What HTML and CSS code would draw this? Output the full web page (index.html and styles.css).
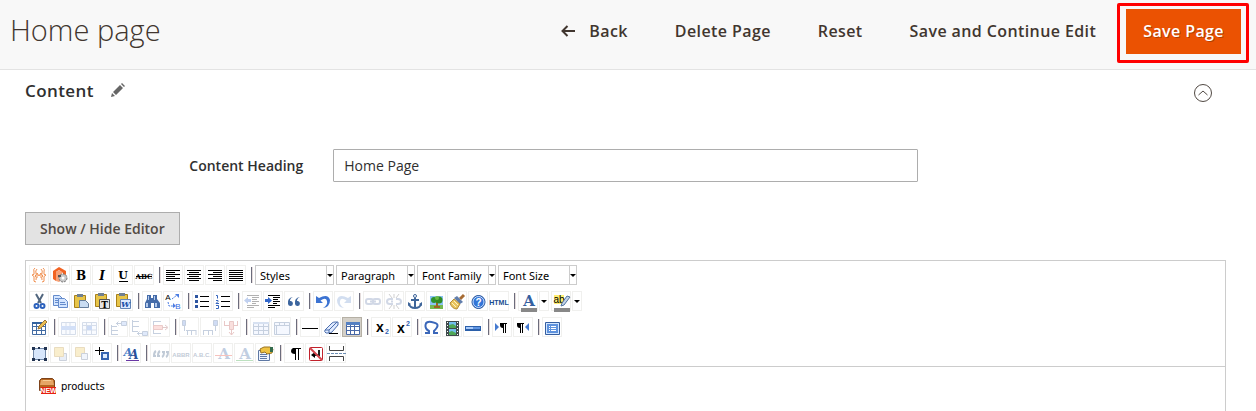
FILE: index.html
```html
<!DOCTYPE html>
<html lang="en">
<head>
    <meta charset="UTF-8">
    <meta name="viewport" content="width=device-width, initial-scale=1.0">
    <title>Home page</title>
    <link rel="stylesheet" href="styles.css">
</head>
<body>
    <header class="page-header">
        <h1>Home page</h1>
        <div class="page-actions">
            <button type="button" class="action"><svg class="back-icon" width="14" height="12" viewBox="0 0 14 12"><path d="M6.500 1L1.500 6l5 5M1.500 6H14"/></svg>Back</button>
            <button type="button" class="action">Delete Page</button>
            <button type="button" class="action">Reset</button>
            <button type="button" class="action">Save and Continue Edit</button>
            <div class="highlight"><button type="button" class="primary">Save Page</button></div>
        </div>
    </header>

    <main class="content">
        <div class="section-title">
            <h2>Content</h2>
            <svg class="pencil" width="14" height="14" viewBox="0 0 14 14"><path d="M0 14l1-4 3 3zM2 9l7-7 3 3-7 7zM10 1l1-1 3 3-1 1z"/></svg>
            <button type="button" class="collapse" aria-label="Collapse"><svg width="20" height="20" viewBox="0 0 20 20"><circle cx="10" cy="10" r="8.500"/><path d="M5.500 12L10 8l4.500 4"/></svg></button>
        </div>

        <div class="field">
            <label for="heading">Content Heading</label>
            <input type="text" id="heading" value="Home Page">
        </div>

        <button type="button" class="toggle-editor">Show / Hide Editor</button>

        <div class="editor">
            <div class="toolbar">
                <!-- Row 1: text style and format lists -->
                <div class="row">
                    <button type="button" class="tool" title="Insert Variable"><svg viewBox="0 0 20 20"><g fill="none" stroke="#f09050"><path d="M6 3Q4 4 5 7T3 10q3 1 2 4t2 3M14 3q2 1 1 4t2 3q-3 1-2 4t-2 3"/><path d="M8 4Q6 6 7 8T6 11q2 1 1 4M12 4q2 2 1 4t1 3q-2 1-1 4"/><path d="M8 13V8l2 3 2-3v5"/></g></svg></button>
                    <button type="button" class="tool" title="Insert Widget"><svg viewBox="0 0 20 20"><path fill="#f26322" d="M9 2l7 4v8l-3 2V8L9 5 6 7v9l-3-2V6z"/><path fill="#f7a278" d="M6 7l3-2 3 2v8l-3 2-3-1z"/><circle cx="13" cy="13" r="4" fill="#c8c8c8" stroke="#777" stroke-dasharray="2 1"/><circle cx="13" cy="13" r="1.500" fill="#fff"/><path fill="#555" d="M8 10h3v2H8z"/></svg></button>
                    <button type="button" class="tool" title="Bold"><svg viewBox="0 0 20 20"><text class="serif" x="10" y="15" font-size="12">B</text></svg></button>
                    <button type="button" class="tool" title="Italic"><svg viewBox="0 0 20 20"><text class="serif" x="10" y="15" font-size="12" font-style="italic">I</text></svg></button>
                    <button type="button" class="tool" title="Underline"><svg viewBox="0 0 20 20"><text class="serif" x="10" y="14" font-size="11">U</text><path fill="#000" d="M6 16h9v1H6z"/></svg></button>
                    <button type="button" class="tool" title="Strikethrough"><svg viewBox="0 0 20 20"><text class="serif" x="10" y="14" font-size="7">ABC</text><path fill="#000" d="M2 11h16v1H2z"/></svg></button>
                    <span class="sep"></span>
                    <button type="button" class="tool" title="Align Left"><svg viewBox="0 0 20 20"><path class="ink" d="M3 5.500h14M3 7.500h9M3 9.500h14M3 11.500h9M3 13.500h14M3 15.500h9"/></svg></button>
                    <button type="button" class="tool" title="Align Center"><svg viewBox="0 0 20 20"><path class="ink" d="M3 5.500h14M5 7.500h10M3 9.500h14M5 11.500h10M3 13.500h14M5 15.500h10"/></svg></button>
                    <button type="button" class="tool" title="Align Right"><svg viewBox="0 0 20 20"><path class="ink" d="M3 5.500h14M8 7.500h9M3 9.500h14M8 11.500h9M3 13.500h14M8 15.500h9"/></svg></button>
                    <button type="button" class="tool" title="Align Full"><svg viewBox="0 0 20 20"><path class="ink" d="M3 5.500h14M3 7.500h14M3 9.500h14M3 11.500h14M3 13.500h14M3 15.500h14"/></svg></button>
                    <span class="sep"></span>
                    <div class="list"><select aria-label="Styles"><option>Styles</option></select></div>
                    <div class="list"><select aria-label="Format"><option>Paragraph</option></select></div>
                    <div class="list"><select aria-label="Font Family"><option>Font Family</option></select></div>
                    <div class="list"><select aria-label="Font Size"><option>Font Size</option></select></div>
                </div>

                <!-- Row 2: clipboard, lists, links and colors -->
                <div class="row">
                    <button type="button" class="tool" title="Cut"><svg viewBox="0 0 20 20"><path fill="none" stroke="#52677f" stroke-width="2" d="M7 3l5 9M14 3l-5 9"/><g fill="none" stroke="#2d62bd" stroke-width="2"><circle cx="7.500" cy="15" r="2"/><circle cx="13.500" cy="15" r="2"/></g></svg></button>
                    <button type="button" class="tool" title="Copy"><svg viewBox="0 0 20 20"><g fill="#d3e5ff" stroke="#648bcb"><path d="M3.500 4.500h6l3 3v7h-9z"/><path d="M8.500 7.500h6l3 3v6h-9z"/><path d="M5 7.500h3M5 9.500h3M5 11.500h3M10 11.500h5M10 13.500h6"/></g></svg></button>
                    <button type="button" class="tool" title="Paste"><svg viewBox="0 0 20 20"><path fill="#e8c549" stroke="#a88018" d="M3.500 4.500h11v12h-11z"/><path fill="#708090" d="M6 3h6v3H6z"/><path fill="#c9dcf2" stroke="#657e9d" d="M8.500 9.500h6l3 3v4h-9z"/></svg></button>
                    <button type="button" class="tool" title="Paste as Plain Text"><svg viewBox="0 0 20 20"><path fill="#e8c549" stroke="#a88018" d="M3.500 3.500h11v12h-11z"/><path fill="#708090" d="M6 2h6v3H6z"/><path fill="#e4e4e4" stroke="#555" d="M7.500 8.500h10v9h-10z"/><text class="serif" x="12.500" y="16.500" font-size="9">T</text></svg></button>
                    <button type="button" class="tool" title="Paste from Word"><svg viewBox="0 0 20 20"><path fill="#e8c549" stroke="#a88018" d="M3.500 3.500h11v12h-11z"/><path fill="#708090" d="M6 2h6v3H6z"/><path fill="#dce9ff" stroke="#6384b5" d="M7.500 8.500h10v9h-10z"/><text class="serif" x="12.500" y="16" font-size="8" font-style="italic" fill="#1d4fa8">W</text></svg></button>
                    <span class="sep"></span>
                    <button type="button" class="tool" title="Find"><svg viewBox="0 0 20 20"><path fill="#446ba8" d="M5 4h4v3h2V4h4v4l3 4v5h-6v-5H9v5H3v-5l2-4z"/><path fill="#b5cbed" d="M6 5h1v4H6zM12 5h1v4h-1zM4 12h2v4H4zM13 12h2v4h-2z"/></svg></button>
                    <button type="button" class="tool" title="Find/Replace"><svg viewBox="0 0 20 20"><text class="sans plain" x="5" y="9" font-size="8">A</text><text class="sans plain" x="15" y="18" font-size="8" fill="#326be0">B</text><path fill="none" stroke="#4b7de2" stroke-dasharray="2 1" d="M9 8l5-4M5 11l1 4h5"/><path fill="#4b7de2" d="M12 3h4v4zM10 12l3 3-3 2z"/></svg></button>
                    <span class="sep"></span>
                    <button type="button" class="tool" title="Unordered List"><svg viewBox="0 0 20 20"><path fill="#2d55a0" d="M3 4h3v3H3zM3 9h3v3H3zM3 14h3v3H3z"/><path class="ink" d="M8 5.500h9M8 10.500h9M8 15.500h9"/></svg></button>
                    <button type="button" class="tool" title="Ordered List"><svg viewBox="0 0 20 20"><path fill="none" stroke="#3565bd" d="M3 4.500h1.500v3M3 9.500h2v1L3 12.500h3M3 14.500h2.500v3H3"/><path class="ink" d="M8 5.500h9M8 10.500h9M8 15.500h9"/></svg></button>
                    <span class="sep"></span>
                    <button type="button" class="tool" title="Outdent" disabled><svg viewBox="0 0 20 20"><path class="ink" d="M5 4.500h12M10 6.500h7M10 8.500h5M10 10.500h7M10 12.500h4M5 14.500h12M5 16.500h7"/><path fill="#3267cb" d="M2 9.500L6 6v2h3v3H6v2z"/></svg></button>
                    <button type="button" class="tool" title="Indent"><svg viewBox="0 0 20 20"><path class="ink" d="M5 4.500h12M10 6.500h7M10 8.500h5M10 10.500h7M10 12.500h4M5 14.500h12M5 16.500h7"/><path fill="#3267cb" d="M9 9.500L5 6v2H2v3h3v2z"/></svg></button>
                    <button type="button" class="tool" title="Blockquote"><svg viewBox="0 0 20 20"><path fill="#3c659e" d="M9 6Q6 7 6 10h1a2.500 2.500 0 1 1-3 3q-1-6 5-7zM16 6q-3 1-3 4h1a2.500 2.500 0 1 1-3 3q-1-6 5-7z"/></svg></button>
                    <span class="sep"></span>
                    <button type="button" class="tool" title="Undo"><svg viewBox="0 0 20 20"><path fill="#3c73d2" d="M3 5v7h7L7.500 9.500Q13 6 14 10t-4 7q7-1 7-8-2-7-11-2z"/></svg></button>
                    <button type="button" class="tool" title="Redo" disabled><svg viewBox="0 0 20 20"><path fill="#6993cc" d="M17 5v7h-7l2.500-2.500Q7 6 6 10t4 7Q3 16 3 9q2-7 11-2z"/></svg></button>
                    <span class="sep"></span>
                    <button type="button" class="tool" title="Insert Link" disabled><svg viewBox="0 0 20 20"><g fill="none" stroke="#6b80ad" stroke-width="2"><rect x="3" y="8" width="7" height="5" rx="2"/><rect x="10" y="8" width="7" height="5" rx="2"/><path d="M7 10.500h6"/></g></svg></button>
                    <button type="button" class="tool" title="Unlink" disabled><svg viewBox="0 0 20 20"><g fill="none" stroke="#6b80ad" stroke-width="2"><path d="M9 8H6Q3 8 3 10.500T6 13h3M12 8h2q3 0 3 2.500T14 13h-2M7 10.500h2"/></g><path stroke="#666" d="M10 3v4M10 14v4M5 3l3 4M15 3l-3 4M5 18l3-4M15 18l-3-4"/></svg></button>
                    <button type="button" class="tool" title="Anchor"><svg viewBox="0 0 20 20"><path fill="none" stroke="#3e6599" stroke-width="2" d="M10 7v10M6 9h8M4 13q1 4 6 4t6-4"/><circle cx="10" cy="5" r="1.500" fill="#fff" stroke="#3e6599"/><path fill="#3e6599" d="M3 15v-4l3 2zM17 15v-4l-3 2z"/></svg></button>
                    <button type="button" class="tool" title="Insert Image"><svg viewBox="0 0 20 20"><path fill="#8bc3f5" d="M4 5h13v12H4z"/><path fill="#75b850" d="M4 14h13v4H4z"/><path fill="#9e6224" d="M10 9h2v6h2v2H8v-2h2z"/><circle cx="8" cy="9" r="3" fill="#2d922b"/><circle cx="13" cy="9" r="3.500" fill="#2f8b23"/><circle cx="11" cy="7" r="2" fill="#6abb43"/></svg></button>
                    <button type="button" class="tool" title="Cleanup"><svg viewBox="0 0 20 20"><path stroke="#a66b32" stroke-width="3" d="M17 4l-4 4"/><path fill="#617eac" d="M10 5l6 6-3 2-6-6z"/><path fill="#e9c45e" stroke="#b38c39" d="M7 8l6 5-3 5q-5 0-7-6z"/><path stroke="#fff3bf" d="M5 12l4 4M7 10l4 4"/></svg></button>
                    <button type="button" class="tool" title="Help"><svg viewBox="0 0 20 20"><circle cx="10.500" cy="11" r="6.500" fill="#3275d8" stroke="#234f96"/><circle cx="10.500" cy="11" r="5.500" fill="none" stroke="#c8dfff"/><text class="sans" x="10.500" y="15" font-size="10" fill="#fff">?</text></svg></button>
                    <button type="button" class="tool" title="Edit HTML"><svg viewBox="0 0 20 20"><text class="sans" x="10" y="14" font-size="7" fill="#164b90">HTML</text></svg></button>
                    <span class="sep"></span>
                    <button type="button" class="tool" title="Text Color"><svg viewBox="0 0 20 20"><text class="serif" x="11" y="15" font-size="15" fill="#34609f">A</text><path fill="#888" d="M3 17h16v4H3z"/></svg></button>
                    <button type="button" class="tool open" title="Choose Text Color"></button>
                    <button type="button" class="tool" title="Background Color"><svg viewBox="0 0 20 20"><path fill="#ffef70" d="M3 4h10v9H3z"/><text class="sans plain" x="8" y="12" font-size="10">ab</text><path fill="#c1d2e8" stroke="#53759e" d="M16 5l3 1-6 8-3 1 1-3z"/><path fill="#888" d="M3 17h16v4H3z"/></svg></button>
                    <button type="button" class="tool open" title="Choose Background Color"></button>
                </div>

                <!-- Row 3: tables and symbols -->
                <div class="row">
                    <button type="button" class="tool" title="Insert Table"><svg viewBox="0 0 20 20"><path fill="#fff" stroke="#426ba2" d="M3.500 5.500h13v12h-13zM3.500 9.500h13M3.500 13.500h13M7.500 7v10M12.500 7v10"/><path fill="#33639f" d="M3 5h14v2H3z"/><path fill="#eabe53" stroke="#9d7535" d="M9 12l1-3 6-6 2 2-6 6z"/></svg></button>
                    <span class="sep"></span>
                    <button type="button" class="tool" title="Row Properties" disabled><svg viewBox="0 0 20 20"><path fill="#edf3ff" stroke="#7890bb" d="M3.500 5.500h14v12h-14zM8 5v12M12 5v12"/><path fill="#709ce5" d="M3 9h15v4H3z"/></svg></button>
                    <button type="button" class="tool" title="Cell Properties" disabled><svg viewBox="0 0 20 20"><path fill="#edf3ff" stroke="#7890bb" d="M3.500 5.500h14v12h-14zM3 8.500h14M3 13h14M7.500 5v12M12.500 5v12"/><path fill="#5384dc" d="M8 9h5v4H8z"/></svg></button>
                    <span class="sep"></span>
                    <button type="button" class="tool" title="Insert Row Before" disabled><svg viewBox="0 0 20 20"><path fill="none" stroke="#456798" d="M3.500 8v10M3 9.500h6M3 13.500h7M3 17.500h7M8 6.500h5M10.500 4.500l-2 2 2 2"/><path fill="#97b9f5" stroke="#456798" d="M13.500 4.500h5v4h-5z"/></svg></button>
                    <button type="button" class="tool" title="Insert Row After" disabled><svg viewBox="0 0 20 20"><path fill="none" stroke="#456798" d="M3.500 3v12M3 4.500h7M3 9.500h7M3 14.500h6M8 16.500h5M10.500 14.500l-2 2 2 2"/><path fill="#97b9f5" stroke="#456798" d="M13.500 14.500h5v4h-5z"/></svg></button>
                    <button type="button" class="tool" title="Delete Row" disabled><svg viewBox="0 0 20 20"><path fill="none" stroke="#456798" d="M3.500 4v13M3 4.500h8M3 16.500h8"/><path fill="#f69c93" stroke="#be5450" d="M3.500 8.500h9v4h-9z"/><path fill="none" stroke="#9e5454" d="M12 10.500h5M15 8l3 2.500-3 2.500"/></svg></button>
                    <span class="sep"></span>
                    <button type="button" class="tool" title="Insert Column Before" disabled><svg viewBox="0 0 20 20"><path fill="#638ade" stroke="#456798" d="M3.500 3.500h3v5h-3z"/><path fill="none" stroke="#456798" d="M5.500 9v5M7 13.500h10M8.500 13v5M12.500 13v5M17 13v5"/></svg></button>
                    <button type="button" class="tool" title="Insert Column After" disabled><svg viewBox="0 0 20 20"><path fill="#638ade" stroke="#456798" d="M13.500 3.500h4v5h-4z"/><path fill="none" stroke="#456798" d="M15.500 9v5M3 13.500h10M3.500 13v5M8.500 13v5M12.500 13v5"/></svg></button>
                    <button type="button" class="tool" title="Remove Column" disabled><svg viewBox="0 0 20 20"><path fill="none" stroke="#b74b48" d="M3.500 4v5M3 8.500h5M16.500 4v5M16 8.500h-4M10.500 12v6M8 15l2.500 3 2.500-3"/><path fill="#ee9890" stroke="#b74b48" d="M8.500 4.500h4v8h-4z"/></svg></button>
                    <span class="sep"></span>
                    <button type="button" class="tool" title="Split Cells" disabled><svg viewBox="0 0 20 20"><path fill="#e1eaff" stroke="#456798" d="M3.500 5.500h15v12h-15zM3 9.500h15M3 13.500h15M8.500 7v10M13.500 7v10"/><path fill="#7d9dd4" d="M3 5h16v2H3z"/></svg></button>
                    <button type="button" class="tool" title="Merge Cells" disabled><svg viewBox="0 0 20 20"><path fill="#e1eaff" stroke="#456798" d="M3.500 5.500h15v12h-15zM3 8.500h15M8.500 5v3M13.500 5v3M5.500 9v8"/></svg></button>
                    <span class="sep"></span>
                    <button type="button" class="tool" title="Horizontal Line"><svg viewBox="0 0 20 20"><path class="ink" d="M2 11.500h16"/></svg></button>
                    <button type="button" class="tool" title="Remove Formatting"><svg viewBox="0 0 20 20"><path fill="#dfeaff" stroke="#4b6ead" d="M4 13l7-7q1-1 3-1h3v3l-6 7q-1 1-3 1H5q-2-1-1-3z"/><path fill="none" stroke="#4b6ead" d="M4 13h4l8-8M8 13v3"/><path class="ink" d="M8 16.500h9"/></svg></button>
                    <button type="button" class="tool active" title="Toggle Guidelines"><svg viewBox="0 0 20 20"><path fill="#fff" stroke="#4868a6" d="M4.500 5.500h13v12h-13zM4 9.500h13M4 13.500h13M8.500 6v11M12.500 6v11"/><path fill="#5580c2" d="M4 5h14v3H4z"/></svg></button>
                    <span class="sep"></span>
                    <button type="button" class="tool" title="Subscript"><svg viewBox="0 0 20 20"><text class="sans" x="9" y="15" font-size="14">x</text><text class="sans" x="16" y="17" font-size="7" fill="#315fb1">2</text></svg></button>
                    <button type="button" class="tool" title="Superscript"><svg viewBox="0 0 20 20"><text class="sans" x="9" y="16" font-size="14">x</text><text class="sans" x="16" y="9" font-size="7" fill="#315fb1">2</text></svg></button>
                    <span class="sep"></span>
                    <button type="button" class="tool" title="Insert Special Character"><svg viewBox="0 0 20 20"><path fill="none" stroke="#3b67b9" stroke-width="2" d="M4 16h4v-2Q4 12 4.500 8T10.500 5 16.500 8 13 14v2h4"/></svg></button>
                    <button type="button" class="tool" title="Insert Media"><svg viewBox="0 0 20 20"><path fill="#404a4c" d="M4 4h13v15H4z"/><path fill="#72bdec" d="M7 5h7v6H7zM7 12h7v6H7z"/><path fill="#4ea655" d="M7 8l4-1 3 2v2H7zM7 15l3-1 4 2v2H7z"/><path stroke="#fff" stroke-dasharray="1 2" d="M5.500 5v13M15.500 5v13"/></svg></button>
                    <button type="button" class="tool" title="Advanced Rule"><svg viewBox="0 0 20 20"><path fill="#2b5fa9" d="M2 9h16v5H2z"/><path fill="#a9cbfa" d="M3 10h7v2H3z"/><path fill="#5f95e3" d="M10 10h7v2h-7z"/></svg></button>
                    <span class="sep"></span>
                    <button type="button" class="tool" title="Left to Right"><svg viewBox="0 0 20 20"><path fill="#457ad0" d="M3 6l4 4-4 4z"/><path d="M8 6h7v1h-1v9h-1V7h-1v9h-1v-5Q8 11 8 8z"/></svg></button>
                    <button type="button" class="tool" title="Right to Left"><svg viewBox="0 0 20 20"><path fill="#457ad0" d="M16 6l-4 4 4 4z"/><path d="M4 6h7v1h-1v9H9V7H8v9H7v-5Q4 11 4 8z"/></svg></button>
                    <span class="sep"></span>
                    <button type="button" class="tool" title="Toggle Fullscreen"><svg viewBox="0 0 20 20"><path fill="#d2e6ff" stroke="#355ea0" d="M3.500 5.500h14v12h-14z"/><path fill="#5e92dd" d="M5 7h11v9H5z"/><path stroke="#fff" d="M7 9.500h1M9 9.500h5M7 11.500h1M9 11.500h5M7 13.500h1M9 13.500h5"/></svg></button>
                </div>

                <!-- Row 4: layers, styles and visual aids -->
                <div class="row">
                    <button type="button" class="tool" title="Insert Layer"><svg viewBox="0 0 20 20"><path fill="#d7e6fb" stroke="#738aa9" d="M4.500 5.500h12v11h-12z"/><path fill="#213351" d="M3 4h3v3H3zM9 4h2v2H9zM15 4h3v3h-3zM3 15h3v3H3zM9 16h2v2H9zM15 15h3v3h-3z"/></svg></button>
                    <button type="button" class="tool" title="Move Forward" disabled><svg viewBox="0 0 20 20"><path fill="#b8c8e8" stroke="#57698b" d="M9.500 10.500h7v7h-7z"/><path fill="#edc85e" stroke="#b78d30" d="M4.500 4.500h9v9h-9z"/></svg></button>
                    <button type="button" class="tool" title="Move Backward" disabled><svg viewBox="0 0 20 20"><path fill="#edc85e" stroke="#b78d30" d="M4.500 4.500h9v9h-9z"/><path fill="#d4e1f7" stroke="#57698b" d="M10.500 10.500h6v6h-6z"/></svg></button>
                    <button type="button" class="tool" title="Absolute Positioning"><svg viewBox="0 0 20 20"><path class="ink" d="M3 7.500h9M7.500 4v8"/><path fill="#dcebff" stroke="#3564b2" stroke-width="2" d="M10 10h6v6h-6z"/></svg></button>
                    <span class="sep"></span>
                    <button type="button" class="tool" title="Edit CSS Style"><svg viewBox="0 0 20 20"><text class="serif" x="7" y="13" font-size="11" font-style="italic" fill="#4478c3">A</text><text class="serif" x="13" y="16" font-size="12" font-style="italic" fill="#294f99">A</text><path stroke="#6a38a4" d="M5 17.500h13"/></svg></button>
                    <span class="sep"></span>
                    <button type="button" class="tool" title="Citation" disabled><svg viewBox="0 0 20 20"><path fill="none" stroke="#304e78" stroke-width="2" d="M6 8q-2 1-2 5h2M10 8q-2 1-2 5h2M12 9h2q0 4-2 5M16 9h2q0 4-2 5"/></svg></button>
                    <button type="button" class="tool" title="Abbreviation" disabled><svg viewBox="0 0 20 20"><text class="sans" x="10" y="14" font-size="6" fill="#304e78">ABBR</text></svg></button>
                    <button type="button" class="tool" title="Acronym" disabled><svg viewBox="0 0 20 20"><text class="sans" x="10" y="14" font-size="6" fill="#304e78">A.B.C.</text></svg></button>
                    <button type="button" class="tool" title="Deletion" disabled><svg viewBox="0 0 20 20"><text class="serif" x="11" y="16" font-size="15" fill="#34609f">A</text><path stroke="#e53828" d="M2 12.500h17"/></svg></button>
                    <button type="button" class="tool" title="Insertion" disabled><svg viewBox="0 0 20 20"><text class="serif" x="11" y="16" font-size="15" fill="#34609f">A</text><path stroke="#249c30" d="M2 17.500h17"/></svg></button>
                    <button type="button" class="tool" title="Attributes"><svg viewBox="0 0 20 20"><path fill="#edf3ff" stroke="#5e78a4" d="M3.500 7.500h11v10h-11z"/><path stroke="#5e78a4" d="M5 11.500h7M5 13.500h7M5 15.500h7"/><path fill="#efc342" stroke="#997320" d="M5 6l4-2h6l3 2-1 4-5 1-2-2-4 1z"/><path fill="#336b4c" d="M15 4h3v5h-3z"/></svg></button>
                    <span class="sep"></span>
                    <button type="button" class="tool" title="Show Control Characters"><svg viewBox="0 0 20 20"><path d="M9 5h8v1h-2v11h-1V6h-2v11h-1v-6Q7 11 7 8q0-2 2-3z"/></svg></button>
                    <button type="button" class="tool" title="Insert Non-breaking Space"><svg viewBox="0 0 20 20"><rect x="4.500" y="4.500" width="13" height="13" rx="1" fill="#fff" stroke="#c1212b"/><path fill="none" stroke="#222" stroke-width="2" d="M14 7v5H9"/><path d="M6 12l4-3v6z"/><path stroke="#d3444c" stroke-width="2" d="M5 5l12 12"/></svg></button>
                    <button type="button" class="tool" title="Page Break"><svg viewBox="0 0 20 20"><path fill="none" stroke="#444" d="M3.500 3v4.500h14V3M3.500 18v-4.500h14V18"/><path stroke="#6c8eb4" stroke-dasharray="3 1" d="M1 10.500h19"/></svg></button>
                </div>
            </div>

            <div class="editor-body">
                <svg class="widget-icon" width="18" height="18" viewBox="0 0 18 18"><path fill="#b5651f" stroke="#7d421a" d="M3.500 1.500h11l2 2v10h-15v-10z"/><path fill="#e5a565" d="M3 3h12l1 5H2z"/><path stroke="#f7cd96" d="M5 3.500h8"/><path fill="#e62010" d="M3 10h15v7H3z"/><text class="sans" x="10.500" y="16" font-size="7" fill="#ffffff">NEW</text></svg>
                <span>products</span>
            </div>
        </div>
    </main>
</body>
</html>
```

FILE: styles.css
```css
* {
    box-sizing: border-box;
}
body {
    font-family: "Open Sans", "Noto Sans", sans-serif;
    margin: 0;
    min-height: 100vh;
    display: flex;
    flex-direction: column;
    background: white;
    color: #41362f;
    font-size: 14px;
}
button, input, select {
    font-family: inherit;
    margin: 0;
}
button {
    cursor: pointer;
}
.page-header {
    display: flex;
    justify-content: space-between;
    align-items: flex-start;
    padding: 3px 7px 6px 10px;
    background: #f8f8f8;
    border-bottom: 1px solid #e3e3e3;
}
h1 {
    margin: 7px 0 0;
    font-size: 29px;
    font-weight: 300;
    line-height: 40px;
}
.page-actions {
    display: flex;
    align-items: flex-start;
    gap: 47px;
}
.action {
    display: flex;
    align-items: center;
    padding: 0;
    border: none;
    background: none;
    color: #41362f;
    font-size: 16px;
    font-weight: 600;
    line-height: 56px;
    letter-spacing: 0.025em;
}
.back-icon {
    margin-right: 14px;
    fill: none;
    stroke: #41362f;
    stroke-width: 2;
}
.highlight {
    margin-left: -26px;
    padding: 3px 5px 6px 6px;
    border: 3px solid #ff0000;
    border-radius: 2px;
}
.primary {
    display: block;
    padding: 0 17px;
    border: none;
    background: #eb5202;
    color: white;
    font-size: 16px;
    font-weight: 600;
    line-height: 45px;
    letter-spacing: 0.025em;
    text-shadow: 1px 1px 0 rgba(0, 0, 0, 0.25);
}
.content {
    flex: 1;
    display: flex;
    flex-direction: column;
    align-items: flex-start;
    padding: 0 30px 0 25px;
}
.section-title {
    display: flex;
    align-items: center;
    width: 100%;
    height: 40px;
}
h2 {
    margin: 0;
    color: #303030;
    font-size: 17px;
    font-weight: 600;
    letter-spacing: 0.025em;
}
.pencil {
    margin-left: 17px;
    fill: #666;
}
.collapse {
    margin: 6px 13px 0 auto;
    padding: 0;
    border: none;
    background: none;
}
.collapse svg {
    display: block;
    fill: none;
    stroke: #514943;
}
.field {
    display: grid;
    grid-template-columns: 1fr 2.1fr 1fr;
    column-gap: 30px;
    align-items: center;
    width: 100%;
    margin: 39px 0 30px;
}
.field label {
    color: #303030;
    font-weight: 600;
    text-align: right;
}
.field input {
    width: 100%;
    height: 33px;
    padding: 0 10px;
    border: 1px solid #adadad;
    border-radius: 1px;
    color: #303030;
    font-size: 14px;
}
.toggle-editor {
    height: 33px;
    padding: 0 14px;
    border: 1px solid #adadad;
    background: #e3e3e3;
    color: #514943;
    font-size: 14px;
    font-weight: 600;
}
.editor {
    flex: 1;
    width: 100%;
    margin-top: 15px;
    border: 1px solid #ccc;
    border-bottom: none;
}
.toolbar {
    display: flex;
    flex-direction: column;
    gap: 6px;
    padding: 4px 3px 3px;
    border-bottom: 1px solid #ccc;
}
.row {
    display: flex;
    height: 20px;
}
.tool {
    flex: none;
    width: 20px;
    height: 20px;
    margin-right: 1px;
    padding: 0;
    border: 1px solid #f0f0ee;
    background: white;
}
.tool svg {
    display: block;
    width: 20px;
    height: 20px;
    margin: -1px;
    overflow: visible;
}
.tool:disabled svg {
    opacity: 0.3;
}
.tool.active {
    border-color: #b5b0a5;
    background: #d4d0c8;
}
.tool.open {
    width: 10px;
    margin-right: 2px;
}
.tool.open::before, .list::after {
    content: "";
    display: block;
    width: 0;
    margin: 0 auto;
    border: 3px solid transparent;
    border-top-color: black;
    border-bottom: none;
}
.sep {
    width: 2px;
    height: 16px;
    margin: 2px 2px 2px 4px;
    border-left: 1px solid #6c6c7c;
    border-right: 1px solid #e4dcdc;
}
.list {
    display: flex;
    align-items: center;
    width: 79px;
    margin-right: 2px;
    border: 1px solid #ccc;
}
.list select {
    width: 71px;
    height: 18px;
    padding: 0 4px;
    border: none;
    border-right: 1px solid #ccc;
    background: none;
    color: black;
    font-family: "Noto Sans", sans-serif;
    font-size: 11px;
    appearance: none;
}
.ink {
    fill: none;
    stroke: black;
}
.serif, .sans {
    text-anchor: middle;
    font-family: "DejaVu Serif", serif;
    font-weight: bold;
}
.sans {
    font-family: "Liberation Sans", sans-serif;
}
.plain {
    font-weight: normal;
}
.editor-body {
    display: flex;
    align-items: center;
    padding: 10px 12px;
    color: black;
    font-family: "DejaVu Sans", sans-serif;
    font-size: 10px;
}
.widget-icon {
    margin-right: 5px;
}
```
